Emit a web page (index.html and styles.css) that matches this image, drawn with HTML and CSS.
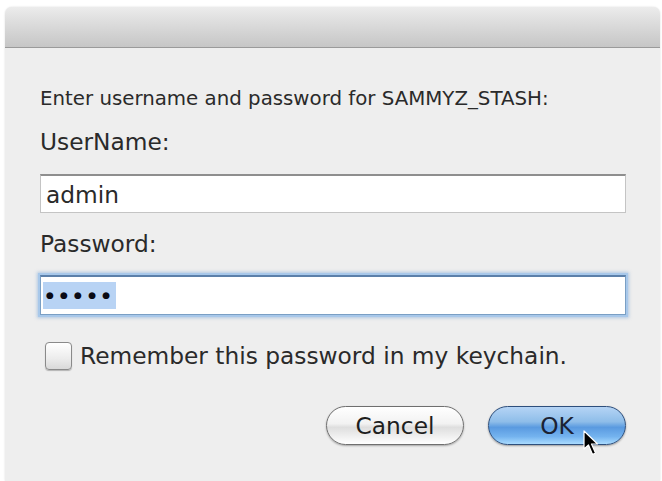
FILE: index.html
```html
<!DOCTYPE html>
<html>
<head>
<meta charset="utf-8">
<link rel="stylesheet" href="styles.css">
</head>
<body>
<div class="window">
  <div class="titlebar"></div>
  <div class="content">
    <p class="intro">Enter username and password for SAMMYZ_STASH:</p>
    <label class="label">UserName:</label>
    <div class="field"><span class="value">admin</span></div>
    <label class="label label-pw">Password:</label>
    <div class="field field-focus"><span class="selection">●●●●●</span></div>
    <div class="check-row">
      <span class="checkbox"></span>
      <span class="check-text">Remember this password in my keychain.</span>
    </div>
    <div class="buttons">
      <button class="btn btn-cancel">Cancel</button>
      <button class="btn btn-ok">OK</button>
      <svg class="cursor" width="17" height="27" viewBox="0 0 17 27">
        <path d="M1 1 L1 19 L5.5 15 L9.5 24.5 L12.5 23 L8.5 14 L14.5 14 Z" fill="#000" stroke="#fff" stroke-width="1.2" stroke-linejoin="round"/>
      </svg>
    </div>
  </div>
</div>
</body>
</html>
```
FILE: styles.css
```css
html, body {
  margin: 0;
  padding: 0;
  background: #ffffff;
}
body {
  font-family: "DejaVu Sans", sans-serif;
  color: #2a2a2a;
}
.window {
  margin: 7px 2px 0 5px;
  height: 474px;
  background: #eeeeee;
  border-radius: 7px 7px 0 0;
  box-shadow: 0 0 2px rgba(0,0,0,0.15);
  overflow: hidden;
}
.titlebar {
  height: 40px;
  background: linear-gradient(#ececec, #dedede 35%, #c6c6c6);
  border-bottom: 1px solid #9a9a9a;
}
.content {
  padding: 0 34px 0 35px;
  display: flex;
  flex-direction: column;
}
.intro {
  margin: 40px 0 0 0;
  font-size: 19.8px;
  line-height: 22px;
}
.label {
  display: block;
  margin-top: 18px;
  font-size: 23.3px;
  line-height: 28px;
}
.label-pw {
  margin-top: 17px;
}
.field {
  margin-top: 18px;
  background: #ffffff;
  border: 1px solid #c4c4c4;
  border-top: 2px solid #8e8e8e;
  display: flex;
  align-items: center;
  padding-left: 5px;
  box-sizing: border-box;
  height: 39px;
}
.value {
  font-size: 23.3px;
}
.field-focus {
  margin-top: 17px;
  height: 40px;
  border: 1px solid #7a9fc4;
  border-top: 2px solid #5c80aa;
  box-shadow: 0 0 0 2px #a8c8ea, 0 0 3px 3px rgba(120,165,215,0.5);
  padding-left: 2px;
}
.selection {
  background: #b8d3f4;
  color: #0a0a14;
  font-size: 9px;
  letter-spacing: 6.2px;
  line-height: 27px;
  padding: 0 0 0 3px;
}
.check-row {
  margin-top: 27px;
  display: flex;
  align-items: center;
  gap: 8px;
  padding-left: 5px;
}
.checkbox {
  width: 25px;
  height: 26px;
  border: 1px solid #8a8a8a;
  border-radius: 4px;
  background: linear-gradient(#ffffff, #ececec 60%, #d9d9d9);
  box-shadow: 0 1px 1px rgba(0,0,0,0.25);
}
.check-text {
  font-size: 23.3px;
  line-height: 28px;
}
.buttons {
  position: relative;
  margin-top: 36px;
  display: flex;
  justify-content: flex-end;
  gap: 24px;
}
.btn {
  width: 138px;
  height: 39px;
  border-radius: 20px;
  font-family: inherit;
  font-size: 23.3px;
  color: #1e1e1e;
  padding: 0;
}
.btn-cancel {
  border: 1px solid #6f6f6f;
  background: linear-gradient(#ffffff, #f2f2f2 45%, #dedede 55%, #f4f4f4 85%, #ffffff);
  box-shadow: 0 1px 2px rgba(0,0,0,0.3);
}
.btn-ok {
  border: 1px solid #2e4f7c;
  background: linear-gradient(#b5d4f5, #8ebde9 40%, #5a9ae0 55%, #74b3ef 80%, #a9dbff);
  box-shadow: 0 1px 2px rgba(0,0,0,0.35);
  color: #1b2233;
}
.cursor {
  position: absolute;
  right: 26px;
  top: 24px;
}
```
